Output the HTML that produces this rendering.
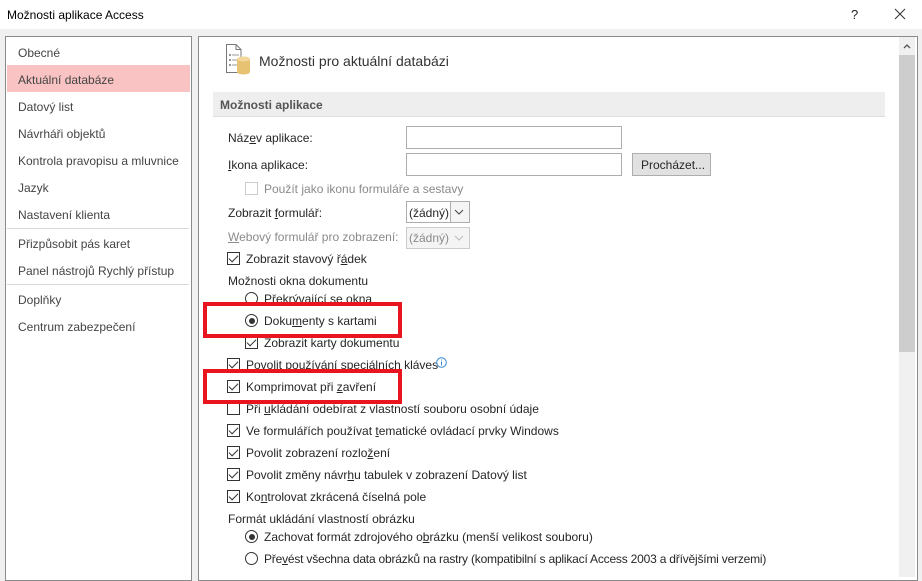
<!DOCTYPE html>
<html><head><meta charset="utf-8"><style>
*{margin:0;padding:0;box-sizing:border-box}
body{width:922px;height:572px;overflow:hidden;background:#f0f0f0;font-family:"Liberation Sans",sans-serif;font-size:12px;color:#262626;position:relative}
.a{position:absolute;white-space:nowrap;line-height:16px;margin-top:1px}
.cb{position:absolute;width:13px;height:13px;border:1px solid #333;background:#fff}
.cb.c::after{content:"";position:absolute;left:3px;top:0px;width:4px;height:8px;border:solid #333;border-width:0 1px 1px 0;transform:rotate(45deg)}
.cb.d{border-color:#ccc}
.rd{position:absolute;width:13px;height:13px;border:1px solid #333;border-radius:50%;background:#fff}
.rd.s::after{content:"";position:absolute;left:2.5px;top:2.5px;width:6px;height:6px;border-radius:50%;background:#333}
.in{position:absolute;border:1px solid #adadad;background:#fff}
.red{position:absolute;border:4px solid #e8141e}
.nav{position:absolute;left:18px;color:#444;line-height:16px;margin-top:1px}
.sep{position:absolute;left:7px;width:182px;height:1px;background:#d9d9d9}
u{text-decoration:underline}
</style></head><body>
<div style="position:absolute;left:0;top:0;width:922px;height:29px;background:#fff"></div>
<div class="a" style="left:7px;top:6px;color:#000">Možnosti aplikace Access</div>
<div class="a" style="left:851px;top:6px;font-size:13px;color:#222">?</div>
<svg style="position:absolute;left:894px;top:8px" width="12" height="12"><path d="M1 1L11 11M11 1L1 11" stroke="#333" stroke-width="1"/></svg>

<div style="position:absolute;left:5px;top:36px;width:187px;height:545px;background:#fff;border:1px solid #8a8a8a"></div>
<div style="position:absolute;left:7px;top:65px;width:183px;height:27px;background:#f9c3c3"></div>
<div class="nav" style="top:44px">Obecné</div>
<div class="nav" style="top:71px">Aktuální databáze</div>
<div class="nav" style="top:98px">Datový list</div>
<div class="nav" style="top:125px">Návrháři objektů</div>
<div class="nav" style="top:152px">Kontrola pravopisu a mluvnice</div>
<div class="nav" style="top:179px">Jazyk</div>
<div class="nav" style="top:206px">Nastavení klienta</div>
<div class="sep" style="top:228px"></div>
<div class="nav" style="top:235px">Přizpůsobit pás karet</div>
<div class="nav" style="top:262px">Panel nástrojů Rychlý přístup</div>
<div class="sep" style="top:284px"></div>
<div class="nav" style="top:291px">Doplňky</div>
<div class="nav" style="top:318px">Centrum zabezpečení</div>

<div style="position:absolute;left:198px;top:36px;width:720px;height:545px;background:#fff;border:1px solid #8a8a8a"></div>
<div style="position:absolute;left:899px;top:37px;width:16px;height:540px;background:#f0f0f0"></div>
<div style="position:absolute;left:899px;top:55px;width:16px;height:297px;background:#cdcdcd"></div>
<svg style="position:absolute;left:903px;top:43px" width="8" height="6"><path d="M1 5L4 2L7 5" stroke="#555" fill="none" stroke-width="1.3"/></svg>

<svg style="position:absolute;left:225px;top:43px" width="30" height="33">
<path d="M1.5 1.5H11L16 6.5V29.5H1.5Z" fill="#fff" stroke="#777"/>
<path d="M11 1.5V6.5H16" fill="none" stroke="#777"/>
<g fill="#999"><rect x="4" y="11" width="2" height="2"/><rect x="4" y="16" width="2" height="2"/><rect x="4" y="21" width="2" height="2"/><rect x="7" y="11.5" width="7" height="1"/><rect x="7" y="16.5" width="7" height="1"/><rect x="7" y="21.5" width="7" height="1"/></g>
<path d="M12 16v13a6.5 2.5 0 0 0 13 0V16Z" fill="#e8c273"/><ellipse cx="18.5" cy="16" rx="6.5" ry="2.5" fill="#f2d79a"/>
</svg>
<div class="a" style="left:259px;top:51px;font-size:14px;line-height:18px;color:#333">Možnosti pro aktuální databázi</div>

<div style="position:absolute;left:213px;top:92px;width:672px;height:25px;background:#eeeeee;border-bottom:1px solid #ddd"></div>
<div class="a" style="left:220px;top:96px;font-weight:bold;color:#555">Možnosti aplikace</div>

<div class="a" style="left:228px;top:129px">Náz<u>e</u>v aplikace:</div>
<div class="in" style="left:406px;top:126px;width:216px;height:23px"></div>
<div class="a" style="left:228px;top:156px"><u>I</u>kona aplikace:</div>
<div class="in" style="left:406px;top:153px;width:216px;height:23px"></div>
<div style="position:absolute;left:632px;top:153px;width:79px;height:23px;background:#e1e1e1;border:1px solid #adadad"></div>
<div class="a" style="left:641px;top:156px">Procházet...</div>
<div class="cb d" style="left:245px;top:182px"></div>
<div class="a" style="left:264px;top:180px;color:#8a8a8a">Použít jako ikonu formuláře a sestavy</div>

<div class="a" style="left:228px;top:204px">Zobrazit <u>f</u>ormulář:</div>
<div class="in" style="left:406px;top:201px;width:64px;height:22px"></div>
<div class="a" style="left:409px;top:204px">(žádný)</div>
<div style="position:absolute;left:450px;top:202px;width:19px;height:20px;border-left:1px solid #adadad;background:#f5f5f5"></div>
<svg style="position:absolute;left:454px;top:209px" width="10" height="6"><path d="M1 1L5 5L9 1" stroke="#444" fill="none"/></svg>

<div class="a" style="left:228px;top:228px;color:#8a8a8a"><u>W</u>ebový formulář pro zobrazení:</div>
<div class="in" style="left:406px;top:227px;width:64px;height:22px;border-color:#ccc;background:#f4f4f4"></div>
<div class="a" style="left:409px;top:229px;color:#8a8a8a">(žádný)</div>
<svg style="position:absolute;left:454px;top:235px" width="10" height="6"><path d="M1 1L5 5L9 1" stroke="#bbb" fill="none"/></svg>

<div class="cb c" style="left:227px;top:252px"></div>
<div class="a" style="left:246px;top:250px">Zobrazit stavový ř<u>á</u>dek</div>
<div class="a" style="left:228px;top:272px">Možnosti okna dokumentu</div>
<div class="rd" style="left:245px;top:292px"></div>
<div class="a" style="left:264px;top:290px">Překrývající se okna</div>
<div class="rd s" style="left:245px;top:314px"></div>
<div class="a" style="left:264px;top:312px">Doku<u>m</u>enty s kartami</div>
<div class="cb c" style="left:245px;top:336px"></div>
<div class="a" style="left:264px;top:334px">Zobrazit karty dokumentu</div>
<div class="cb c" style="left:227px;top:358px"></div>
<div class="a" style="left:246px;top:356px">Povolit používání speciálních kláves</div>
<svg style="position:absolute;left:436px;top:357px" width="11" height="11"><circle cx="5.5" cy="5.5" r="4.8" fill="none" stroke="#3c8dd8"/><rect x="5" y="4.5" width="1" height="4" fill="#3c8dd8"/><rect x="5" y="2.5" width="1" height="1" fill="#3c8dd8"/></svg>
<div class="cb c" style="left:227px;top:380px"></div>
<div class="a" style="left:246px;top:378px">Komprimovat při <u>z</u>avření</div>
<div class="cb" style="left:227px;top:402px"></div>
<div class="a" style="left:246px;top:400px">Při <u>u</u>kládání odebírat z vlastností souboru osobní údaje</div>
<div class="cb c" style="left:227px;top:424px"></div>
<div class="a" style="left:246px;top:422px">Ve formulářích používat <u>t</u>ematické ovládací prvky Windows</div>
<div class="cb c" style="left:227px;top:446px"></div>
<div class="a" style="left:246px;top:444px">Povolit zobrazení rozlo<u>ž</u>ení</div>
<div class="cb c" style="left:227px;top:468px"></div>
<div class="a" style="left:246px;top:466px">Povolit změny návr<u>h</u>u tabulek v zobrazení Datový list</div>
<div class="cb c" style="left:227px;top:490px"></div>
<div class="a" style="left:246px;top:488px">Ko<u>n</u>trolovat zkrácená číselná pole</div>
<div class="a" style="left:228px;top:510px">Formát ukládání vlastností obrázku</div>
<div class="rd s" style="left:245px;top:530px"></div>
<div class="a" style="left:264px;top:528px">Zachovat formát zdrojového o<u>b</u>rázku (menší velikost souboru)</div>
<div class="rd" style="left:245px;top:552px"></div>
<div class="a" style="left:264px;top:550px;letter-spacing:-0.2px">Pře<u>v</u>ést všechna data obrázků na rastry (kompatibilní s aplikací Access 2003 a dřívějšími verzemi)</div>

<div class="red" style="left:203px;top:302px;width:199px;height:36px"></div>
<div class="red" style="left:203px;top:369px;width:199px;height:35px"></div>
</body></html>
